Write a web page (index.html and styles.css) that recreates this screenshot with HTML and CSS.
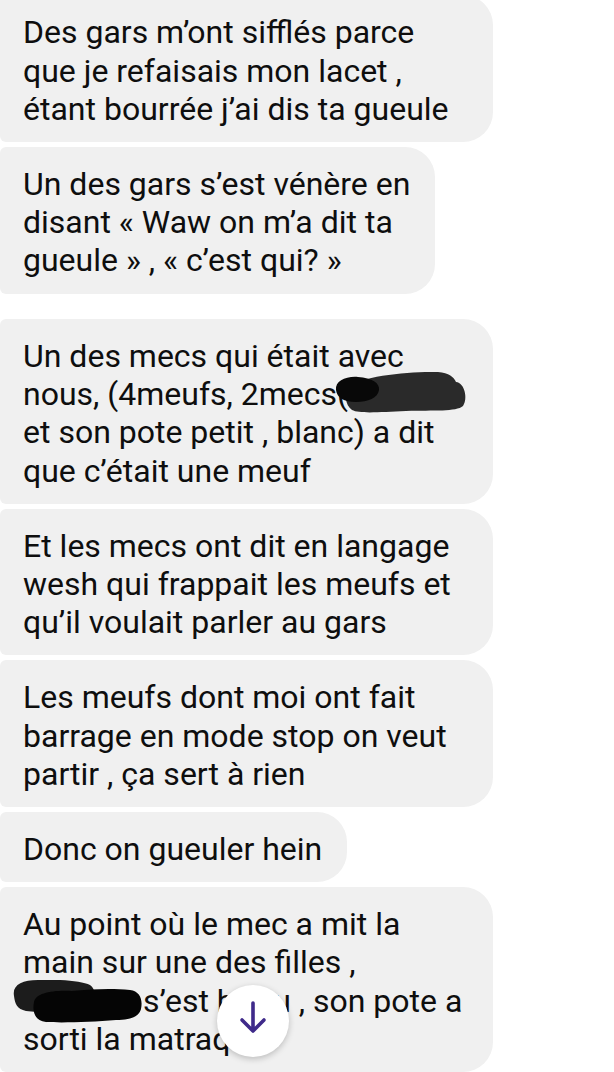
FILE: index.html
```html
<!DOCTYPE html>
<html lang="fr">
<head>
    <meta charset="UTF-8">
    <meta name="viewport" content="width=device-width, initial-scale=1.0">
    <title>Conversation</title>
    <link rel="stylesheet" href="styles.css">
</head>
<body>
    <div class="chat">
        <div class="bubble wide">Des gars m’ont sifflés parce<br>que je refaisais mon lacet ,<br>étant bourrée j’ai dis ta gueule</div>
        <div class="bubble">Un des gars s’est vénère en<br>disant « Waw on m’a dit ta<br>gueule » , « c’est qui? »</div>

        <div class="bubble wide later">Un des mecs qui était avec<br>nous, (4meufs, 2mecs<span class="redact">(<svg class="ink ink-mecs" width="134" height="44" viewBox="0 0 134 44">
                <path d="M14 16 C26 5 76 0 104 1 C115 2 120 6 122 11 C131 12 134 28 129 35 C122 41 100 39 72 40 C46 41 26 43 18 39 C11 34 10 22 14 16 Z" fill="#2a2a2a"/>
                <path d="M2 19 C1 10 12 5 24 6 C38 7 46 12 45 19 C44 27 34 31 22 31 C10 31 3 27 2 19 Z" fill="#080808"/>
            </svg></span><br>et son pote petit , blanc) a dit<br>que c’était une meuf</div>
        <div class="bubble wide">Et les mecs ont dit en langage<br>wesh qui frappait les meufs et<br>qu’il voulait parler au gars</div>
        <div class="bubble wide">Les meufs dont moi ont fait<br>barrage en mode stop on veut<br>partir , ça sert à rien</div>
        <div class="bubble">Donc on gueuler hein</div>
        <div class="bubble wide">Au point où le mec a mit la<br>main sur une des filles ,<br><span class="name"><svg class="ink ink-name" width="134" height="44" viewBox="0 0 134 44">
                <path d="M2 16 C0 5 10 0 26 0 C48 -1 70 1 78 5 C85 9 84 24 75 29 C60 33 30 33 14 31 C5 29 3 24 2 16 Z" fill="#1c1c1c"/>
                <path d="M22 22 C24 13 40 10 60 11 C80 9 100 8 118 10 C128 11 131 20 129 29 C127 37 118 40 104 40 C80 42 50 43 34 42 C23 41 20 32 22 22 Z" fill="#050505"/>
            </svg></span> s’est battu , son pote a<br>sorti la matraque</div>
    </div>

    <button class="scroll-down" type="button">
        <svg width="72" height="72" viewBox="0 0 72 72">
            <path d="M36 18 V46 M25 35 L36 46 L47 35" fill="none" stroke="#3f2a8a" stroke-width="3.6" stroke-linecap="round" stroke-linejoin="round"/>
        </svg>
    </button>
</body>
</html>
```

FILE: styles.css
```css
body {
    margin: 0;
    padding: 0;
    background-color: #ffffff;
    font-family: Roboto, "Noto Sans", Arial, sans-serif;
    overflow: hidden;
}
.chat {
    display: flex;
    flex-direction: column;
    align-items: flex-start;
    gap: 5px;
    margin-top: -4.6px;
}
.bubble {
    background-color: #f0f0f0;
    color: #0e0e0e;
    font-size: 32px;
    line-height: 38.2px;
    padding: 18px 25px 14px 23px;
    border-radius: 6px 30px 30px 6px;
    white-space: nowrap;
}
.bubble.wide {
    width: 493px;
    box-sizing: border-box;
}
.bubble.later {
    margin-top: 20.4px;
}
.redact {
    position: relative;
}
.name {
    display: inline-block;
    position: relative;
    width: 112px;
    height: 20px;
}
.ink {
    position: absolute;
}
.ink-mecs {
    left: -3px;
    top: -4px;
}
.ink-name {
    left: -11px;
    top: -12px;
}
.scroll-down {
    position: fixed;
    left: 217px;
    bottom: 15px;
    width: 72px;
    height: 72px;
    padding: 0;
    border: none;
    border-radius: 50%;
    background-color: #ffffff;
    box-shadow: 0 2px 6px rgba(0, 0, 0, 0.22);
    cursor: pointer;
}
.scroll-down svg {
    display: block;
}
```
